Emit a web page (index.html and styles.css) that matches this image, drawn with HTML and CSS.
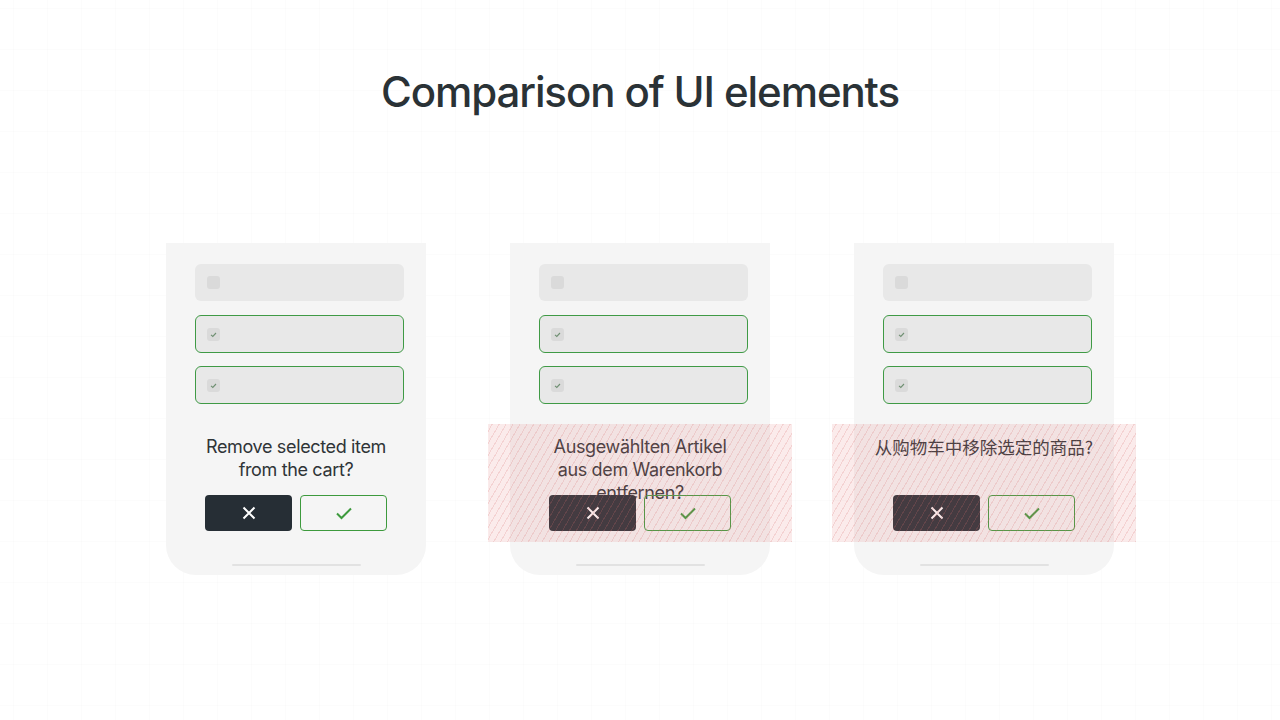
FILE: index.html
```html
<!DOCTYPE html>
<html>
<head>
<meta charset="utf-8">
<link rel="stylesheet" href="styles.css">
</head>
<body>
<main class="page">
  <h1 class="title">Comparison of UI elements</h1>
  <section class="cards">
    <div class="card">
      <div class="rows">
        <div class="row"><span class="box"></span></div>
        <div class="row sel"><span class="box"><svg viewBox="0 0 13 13"><path d="M4 6.8l1.8 1.6L9 5" fill="none" stroke="#6f8f72" stroke-width="1.1"/></svg></span></div>
        <div class="row sel"><span class="box"><svg viewBox="0 0 13 13"><path d="M4 6.8l1.8 1.6L9 5" fill="none" stroke="#6f8f72" stroke-width="1.1"/></svg></span></div>
      </div>
      <p class="msg">Remove selected item from the cart?</p>
      <div class="actions">
        <button class="btn no"><svg viewBox="0 0 20 20"><path d="M4.5 4.5l11 11M15.5 4.5l-11 11" stroke="#fff" stroke-width="2" fill="none"/></svg></button>
        <button class="btn yes"><svg viewBox="0 0 20 20"><path d="M3 10.5l4.5 4.5 9.5-9.5" stroke="#3d9a3d" stroke-width="2" fill="none"/></svg></button>
      </div>
      <div class="home"></div>
    </div>

    <div class="card">
      <div class="rows">
        <div class="row"><span class="box"></span></div>
        <div class="row sel"><span class="box"><svg viewBox="0 0 13 13"><path d="M4 6.8l1.8 1.6L9 5" fill="none" stroke="#6f8f72" stroke-width="1.1"/></svg></span></div>
        <div class="row sel"><span class="box"><svg viewBox="0 0 13 13"><path d="M4 6.8l1.8 1.6L9 5" fill="none" stroke="#6f8f72" stroke-width="1.1"/></svg></span></div>
      </div>
      <p class="msg">Ausgewählten Artikel aus dem Warenkorb entfernen?</p>
      <div class="actions">
        <button class="btn no"><svg viewBox="0 0 20 20"><path d="M4.5 4.5l11 11M15.5 4.5l-11 11" stroke="#fff" stroke-width="2" fill="none"/></svg></button>
        <button class="btn yes"><svg viewBox="0 0 20 20"><path d="M3 10.5l4.5 4.5 9.5-9.5" stroke="#3d9a3d" stroke-width="2" fill="none"/></svg></button>
      </div>
      <div class="home"></div>
      <div class="overflow"></div>
    </div>

    <div class="card">
      <div class="rows">
        <div class="row"><span class="box"></span></div>
        <div class="row sel"><span class="box"><svg viewBox="0 0 13 13"><path d="M4 6.8l1.8 1.6L9 5" fill="none" stroke="#6f8f72" stroke-width="1.1"/></svg></span></div>
        <div class="row sel"><span class="box"><svg viewBox="0 0 13 13"><path d="M4 6.8l1.8 1.6L9 5" fill="none" stroke="#6f8f72" stroke-width="1.1"/></svg></span></div>
      </div>
      <p class="msg cjk">从购物车中移除选定的商品?</p>
      <div class="actions">
        <button class="btn no"><svg viewBox="0 0 20 20"><path d="M4.5 4.5l11 11M15.5 4.5l-11 11" stroke="#fff" stroke-width="2" fill="none"/></svg></button>
        <button class="btn yes"><svg viewBox="0 0 20 20"><path d="M3 10.5l4.5 4.5 9.5-9.5" stroke="#3d9a3d" stroke-width="2" fill="none"/></svg></button>
      </div>
      <div class="home"></div>
      <div class="overflow"></div>
    </div>
  </section>
</main>
</body>
</html>
```

FILE: styles.css
```css
* { box-sizing: border-box; }
html, body { margin: 0; padding: 0; }
body {
  width: 1280px;
  height: 720px;
  overflow: hidden;
  background: #ffffff;
  font-family: Inter, "Noto Sans", "Noto Sans CJK SC", sans-serif;
  color: #2d3236;
}
.page {
  height: 720px;
  display: flex;
  flex-direction: column;
  align-items: center;
  background-image:
    linear-gradient(to right, rgba(0,0,0,0.01) 1px, transparent 1px),
    linear-gradient(to bottom, rgba(0,0,0,0.01) 1px, transparent 1px);
  background-size: 34px 41px;
  background-position: 13px 8px;
}
.title {
  margin: 66px 0 0 0;
  font-size: 42px;
  line-height: 52px;
  font-weight: 500;
  letter-spacing: -1.1px;
  color: #2a3236;
}
.cards {
  margin-top: 125px;
  display: flex;
  gap: 84px;
}
.card {
  position: relative;
  width: 260px;
  height: 332px;
  background: #f5f5f5;
  border-radius: 0 0 30px 30px;
  padding: 21px 22px 0 29px;
  display: flex;
  flex-direction: column;
  align-items: center;
}
.rows {
  width: 209px;
  display: flex;
  flex-direction: column;
  gap: 14px;
}
.row {
  height: 37px;
  background: #e8e8e8;
  border-radius: 6px;
  display: flex;
  align-items: center;
  padding-left: 12px;
}
.row.sel {
  height: 38px;
  border: 1px solid #3f9a45;
  padding-left: 11px;
}
.row.sel + .row.sel { margin-top: -1px; }
.box {
  width: 13px;
  height: 13px;
  border-radius: 3px;
  background: #dadada;
  display: block;
}
.box svg { width: 13px; height: 13px; display: block; }
.msg {
  margin: 31px 0 0 -7px;
  width: 192px;
  height: 46px;
  font-size: 18px;
  line-height: 23px;
  letter-spacing: -0.35px;
  text-align: center;
  color: #2f3437;
}
.msg.cjk {
  width: 240px;
  font-family: "Noto Sans CJK SC", sans-serif;
  letter-spacing: 0;
  font-size: 17.5px;
}
.actions {
  margin: 14px 0 0 -7px;
  display: flex;
  gap: 8px;
}
.btn {
  width: 87px;
  height: 36px;
  border-radius: 4px;
  display: flex;
  align-items: center;
  justify-content: center;
  padding: 0;
  font: inherit;
}
.btn svg { width: 20px; height: 20px; display: block; }
.btn.no { background: #262e35; border: none; }
.btn.yes { background: transparent; border: 1px solid #3d9a3d; }
.home {
  margin: 33px 0 0 -7px;
  width: 129px;
  height: 2px;
  background: #e2e2e2;
  border-radius: 1px;
}
.overflow {
  position: absolute;
  left: -22px;
  top: 181px;
  width: 304px;
  height: 118px;
  background-color: rgba(232, 130, 130, 0.16);
  background-image: repeating-linear-gradient(
    -60deg,
    rgba(215, 110, 110, 0.2) 0px,
    rgba(215, 110, 110, 0.2) 1px,
    transparent 1px,
    transparent 6px
  );
}
```
